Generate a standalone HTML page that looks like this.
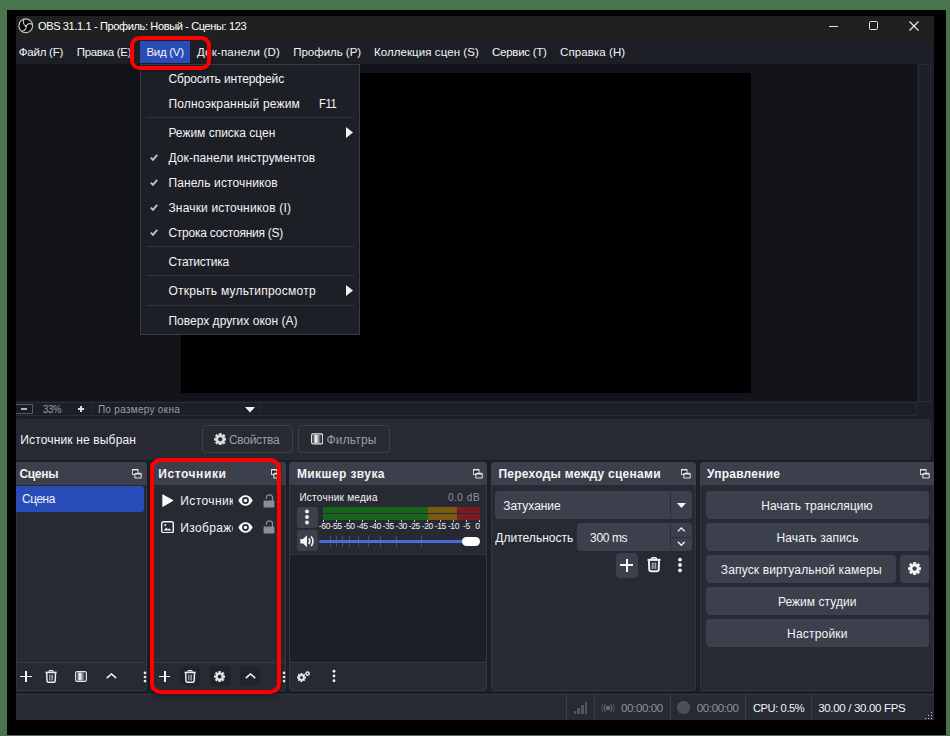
<!DOCTYPE html>
<html lang="ru">
<head>
<meta charset="utf-8">
<title>OBS 31.1.1</title>
<style>
*{box-sizing:border-box;margin:0;padding:0}
html,body{width:950px;height:736px;overflow:hidden}
body{background:#49744c;font-family:"Liberation Sans",sans-serif;font-size:12px;color:#f4f4f4;position:relative}
.b{position:absolute;display:block}
.t{position:absolute;white-space:pre;line-height:1;color:#f4f4f4}
</style>
</head>
<body>
<div class="b" id="clip" style="left:0;top:0;width:950px;height:736px;overflow:hidden">

<div class="b" style="left:7px;top:10px;width:939px;height:725px;background:#000;"></div>
<div class="b" style="left:16px;top:16px;width:918px;height:704px;background:#1d1f26;"></div>
<div class="b" style="left:16px;top:16px;width:918px;height:24px;background:#202020;"></div>
<svg class="b" style="left:18px;top:18px" width="15.500" height="15.500" viewBox="0 0 30 30">
<circle cx="15" cy="15" r="13.300" fill="#0b0b0b" stroke="#c4c4c4" stroke-width="2.200"/>
<g fill="none" stroke="#c9c9c9" stroke-width="2" stroke-linecap="round">
<path d="M15.500 15.500Q8.500 12 11.200 3.400"/>
<path d="M15.500 15.500Q19.500 8.500 27.500 12.200"/>
<path d="M15.500 15.500Q17 23.500 7.500 25.800"/>
</g><circle cx="15.500" cy="15.500" r="1.800" fill="#d8d8d8"/></svg>
<span class="t" style="left:38.2px;top:21.0px;font-size:11.5px;color:#ffffff;letter-spacing:-0.40px;transform:scaleX(0.9605);transform-origin:0 0;">OBS 31.1.1 - Профиль: Новый - Сцены: 123</span>
<div class="b" style="left:829px;top:26px;width:9px;height:1px;background:#e6e6e6;"></div>
<div class="b" style="left:869px;top:21px;width:9px;height:9px;border:1px solid #e6e6e6;border-radius:1.5px"></div>
<svg class="b" style="left:909.400px;top:20.600px" width="10" height="10" viewBox="0 0 10 10"><path d="M.5.500l9 9M9.500.500l-9 9" stroke="#ececec" stroke-width="1.150" fill="none"/></svg>
<div class="b" style="left:16px;top:40px;width:918px;height:24px;background:#1d1f26;"></div>
<div class="b" style="left:140px;top:41px;width:50px;height:22px;background:#284cb8;"></div>
<span class="t" style="left:18.8px;top:47.0px;font-size:11.5px;letter-spacing:-0.24px;">Файл (F)</span>
<span class="t" style="left:76.7px;top:47.0px;font-size:11.5px;letter-spacing:-0.29px;">Правка (E)</span>
<span class="t" style="left:146.4px;top:47.0px;font-size:11.5px;letter-spacing:-0.29px;">Вид (V)</span>
<span class="t" style="left:197.0px;top:47.0px;font-size:11.5px;letter-spacing:0.19px;">Док-панели (D)</span>
<span class="t" style="left:293.2px;top:47.0px;font-size:11.5px;letter-spacing:-0.02px;">Профиль (P)</span>
<span class="t" style="left:374.0px;top:47.0px;font-size:11.5px;letter-spacing:0.07px;">Коллекция сцен (S)</span>
<span class="t" style="left:492.0px;top:47.0px;font-size:11.5px;letter-spacing:-0.27px;">Сервис (T)</span>
<span class="t" style="left:560.0px;top:47.0px;font-size:11.5px;letter-spacing:0.09px;">Справка (H)</span>
<div class="b" style="left:16px;top:64px;width:901px;height:337px;background:#13141a;"></div>
<div class="b" style="left:181px;top:73px;width:570px;height:320px;background:#000;"></div>
<div class="b" style="left:917.5px;top:64px;width:13.5px;height:337.5px;background:#1d1f26;border:1px solid #292c36;"></div>
<div class="b" style="left:931px;top:64px;width:3px;height:352px;background:#1d1f26;"></div>
<div class="b" style="left:16px;top:402px;width:901px;height:14px;background:#1d1f26;border:1px solid #292c36;border-left:none;"></div>
<div class="b" style="left:16px;top:403.500px;width:16.500px;height:10.500px;border:1px solid #555966;border-left:none;background:#1a1c22"></div>
<div class="b" style="left:20.7px;top:408px;width:6.699999999999999px;height:2px;background:#b0b2ba;"></div>
<span class="t" style="left:42.8px;top:405.0px;font-size:10px;color:#9a9da8;letter-spacing:-0.35px;transform:scaleX(0.9578);transform-origin:0 0;">33%</span>
<div class="b" style="left:77.7px;top:408.1px;width:6.599999999999994px;height:1.6999999999999886px;background:#dcdcdc;"></div>
<div class="b" style="left:80.15px;top:405.6px;width:1.6999999999999886px;height:6.699999999999989px;background:#dcdcdc;"></div>
<div class="b" style="left:90.5px;top:403px;width:1.0px;height:12px;background:#262932;"></div>
<span class="t" style="left:97.9px;top:405.0px;font-size:10px;color:#9a9da8;letter-spacing:0.29px;">По размеру окна</span>
<svg class="b" style="left:245px;top:406.500px" width="10" height="6" viewBox="0 0 10 6"><path d="M0 0h10L5 5.500z" fill="#f0f0f0"/></svg>
<div class="b" style="left:259.5px;top:403px;width:1.0px;height:12px;background:#262932;"></div>
<div class="b" style="left:16px;top:419px;width:915.2px;height:40.5px;background:#272a33;border-radius:4px;"></div>
<span class="t" style="left:20.2px;top:434.0px;font-size:12px;letter-spacing:0.16px;">Источник не выбран</span>
<div class="b" style="left:201.500px;top:425px;width:91px;height:28px;border:1px solid #3c404d;border-radius:4px"></div>
<svg class="b" style="left:213.95px;top:432.95px" width="12.5" height="12.5" viewBox="-6.700 -6.700 13.400 13.400"><path d="M-1.31 -4.72L-1.15 -6.50A6.6 6.6 0 0 1 1.15 -6.50L1.31 -4.72A4.9 4.9 0 0 1 2.41 -4.26L3.79 -5.41A6.6 6.6 0 0 1 5.41 -3.79L4.26 -2.41A4.9 4.9 0 0 1 4.72 -1.31L6.50 -1.15A6.6 6.6 0 0 1 6.50 1.15L4.72 1.31A4.9 4.9 0 0 1 4.26 2.41L5.41 3.79A6.6 6.6 0 0 1 3.79 5.41L2.41 4.26A4.9 4.9 0 0 1 1.31 4.72L1.15 6.50A6.6 6.6 0 0 1 -1.15 6.50L-1.31 4.72A4.9 4.9 0 0 1 -2.41 4.26L-3.79 5.41A6.6 6.6 0 0 1 -5.41 3.79L-4.26 2.41A4.9 4.9 0 0 1 -4.72 1.31L-6.50 1.15A6.6 6.6 0 0 1 -6.50 -1.15L-4.72 -1.31A4.9 4.9 0 0 1 -4.26 -2.41L-5.41 -3.79A6.6 6.6 0 0 1 -3.79 -5.41L-2.41 -4.26A4.9 4.9 0 0 1 -1.31 -4.72ZM2.5 0A2.5 2.5 0 1 0 -2.5 0A2.5 2.5 0 1 0 2.5 0Z" fill="#dedede" fill-rule="evenodd" stroke="#dedede" stroke-width="0.5" stroke-linejoin="round"/></svg>
<span class="t" style="left:229.0px;top:434.0px;font-size:12px;color:#9a9da8;letter-spacing:-0.30px;">Свойства</span>
<div class="b" style="left:298px;top:425px;width:91.500px;height:28px;border:1px solid #3c404d;border-radius:4px"></div>
<svg class="b" style="left:310.65000000000003px;top:433.34999999999997px" width="12.3" height="11.7" viewBox="0 0 12 11"><defs><linearGradient id="g316" x1="0" x2="1" y1="0" y2="0"><stop offset="0" stop-color="#e6e6e6" stop-opacity="0.450"/><stop offset="0.220" stop-color="#e6e6e6"/><stop offset="0.400" stop-color="#e6e6e6"/><stop offset="1" stop-color="#e6e6e6" stop-opacity="0.030"/></linearGradient></defs><rect x="0.6" y="0.6" width="10.800" height="9.800" rx="1.600" fill="none" stroke="#e6e6e6" stroke-width="1.200"/><rect x="2.400" y="1.500" width="7.500" height="8" fill="url(#g316)"/></svg>
<span class="t" style="left:326.5px;top:434.0px;font-size:12px;color:#9a9da8;letter-spacing:0.16px;">Фильтры</span>
<div class="b" style="left:16px;top:462px;width:130.8px;height:228.500px;background:#272a33;border-radius:0 4px 4px 0;box-shadow:inset 0 0 0 1px #343742"></div>
<div class="b" style="left:16px;top:462px;width:130.8px;height:23px;background:#3c404d;border-radius:0 4px 0 0"></div>
<span class="t" style="left:19.4px;top:468.0px;font-size:12px;font-weight:700;letter-spacing:-0.28px;">Сцены</span>
<svg class="b" style="left:132px;top:469px" width="10" height="10" viewBox="0 0 10 10"><rect x="0.5" y="0.5" width="5.500" height="5" fill="#262830" stroke="#d8d8d8" stroke-width="1"/><rect x="0.5" y="0" width="5.500" height="1.500" fill="#e8e8e8"/><rect x="2.800" y="4.300" width="6.400" height="4.700" rx="0.8" fill="#3c404d" stroke="#dcdcdc" stroke-width="1.100"/><rect x="2.800" y="4" width="6.400" height="1.600" rx="0.5" fill="#e8e8e8"/></svg>
<div class="b" style="left:16px;top:485.5px;width:128px;height:26.0px;background:#284cb8;border-radius:0 3px 3px 0;"></div>
<span class="t" style="left:21.9px;top:493.0px;font-size:12px;letter-spacing:-0.42px;transform:scaleX(0.9878);transform-origin:0 0;">Сцена</span>
<div class="b" style="left:16px;top:661.6px;width:130.8px;height:1.0px;background:#363945;"></div>
<div class="b" style="left:20.05px;top:675.55px;width:11.5px;height:1.900000000000091px;background:#f6f6f6;"></div><div class="b" style="left:24.85px;top:670.75px;width:1.8999999999999986px;height:11.5px;background:#f6f6f6;"></div>
<svg class="b" style="left:44.90px;top:669.95px" width="12.2" height="13.1" viewBox="0 0 13 14"><path d="M4.400 2V1.400Q4.400.7 5.100.7h2.800q.7 0 .7.700V2" fill="none" stroke="#ececec" stroke-width="1.30"/><path d="M.5 2.600h12" stroke="#ececec" stroke-width="1.70" fill="none"/><path d="M1.800 3.200l.3 8.300q.1 1.700 1.700 1.700h5.400q1.600 0 1.700-1.700l.3-8.300" fill="none" stroke="#ececec" stroke-width="1.60"/><path d="M4.900 5v6.200M6.500 5v6.200M8.100 5v6.200" stroke="#ececec" stroke-width="1" opacity="0.700"/></svg>
<svg class="b" style="left:75.0px;top:670.8px" width="12" height="11" viewBox="0 0 12 11"><defs><linearGradient id="g81" x1="0" x2="1" y1="0" y2="0"><stop offset="0" stop-color="#e4e4e4" stop-opacity="0.450"/><stop offset="0.220" stop-color="#e4e4e4"/><stop offset="0.400" stop-color="#e4e4e4"/><stop offset="1" stop-color="#e4e4e4" stop-opacity="0.030"/></linearGradient></defs><rect x="0.6" y="0.6" width="10.800" height="9.800" rx="1.600" fill="none" stroke="#e4e4e4" stroke-width="1.200"/><rect x="2.400" y="1.500" width="7.500" height="8" fill="url(#g81)"/></svg>
<svg class="b" style="left:105.9px;top:673.4px" width="11" height="6" viewBox="0 0 11 6"><path d="M.8 5.2L5.5 1 10.2 5.2" fill="none" stroke="#f0f0f0" stroke-width="1.6"/></svg>
<svg class="b" style="left:141.8px;top:667.5px" width="6" height="18" viewBox="0 0 6 18"><circle cx="3" cy="4.9" r="1.35" fill="#ececec"/><circle cx="3" cy="9" r="1.35" fill="#ececec"/><circle cx="3" cy="13.1" r="1.35" fill="#ececec"/></svg>
<div class="b" style="left:150px;top:462px;width:135.60000000000002px;height:228.500px;background:#272a33;border-radius:4px;box-shadow:inset 0 0 0 1px #343742"></div>
<div class="b" style="left:150px;top:462px;width:135.60000000000002px;height:23px;background:#3c404d;border-radius:4px 4px 0 0"></div>
<span class="t" style="left:158.2px;top:468.0px;font-size:12px;font-weight:700;letter-spacing:0.58px;">Источники</span>
<svg class="b" style="left:270.5px;top:469px" width="10" height="10" viewBox="0 0 10 10"><rect x="0.5" y="0.5" width="5.500" height="5" fill="#262830" stroke="#d8d8d8" stroke-width="1"/><rect x="0.5" y="0" width="5.500" height="1.500" fill="#e8e8e8"/><rect x="2.800" y="4.300" width="6.400" height="4.700" rx="0.8" fill="#3c404d" stroke="#dcdcdc" stroke-width="1.100"/><rect x="2.800" y="4" width="6.400" height="1.600" rx="0.5" fill="#e8e8e8"/></svg>
<svg class="b" style="left:161.800px;top:493.800px" width="11.500" height="13.200" viewBox="0 0 11.500 13.200"><path d="M.3.800Q.3 0 1 .4l10 5.700q.6.500 0 1L1 12.800q-.7.400-.7-.4z" fill="#fafafa"/></svg>
<div class="b" style="left:180.300px;top:490px;width:52.500px;height:22px;overflow:hidden"><span class="t" style="left:0;top:5px;font-size:12px;letter-spacing:0.400px">Источник медиа</span></div>
<svg class="b" style="left:238.1px;top:495.0px" width="15" height="11" viewBox="0 0 15 11"><path d="M.3 5.500C2.200 1.800 4.700.3 7.500.3s5.300 1.500 7.200 5.200c-1.900 3.700-4.400 5.200-7.200 5.200S2.200 9.200.3 5.500z" fill="#fafafa"/><circle cx="7.500" cy="5.500" r="3.400" fill="#272a33"/><circle cx="7.500" cy="5.500" r="1.700" fill="#fafafa"/></svg>
<svg class="b" style="left:262.6px;top:493.6px" width="12" height="14" viewBox="0 0 12 14"><path d="M2.300 7V3.800C2.300 1.900 3.600.8 5.300.8c1.700 0 3 1.100 3 3V7" fill="none" stroke="#8e8e8e" stroke-width="1.300" transform="translate(1.200 0)"/><rect x="0.6" y="6.600" width="10.800" height="7" rx="0.8" fill="#8e8e8e"/><rect x="3.200" y="4.500" width="1.500" height="2.400" fill="#272a33"/></svg>
<svg class="b" style="left:160.800px;top:520.800px" width="13" height="12.500" viewBox="0 0 13 12.500"><rect x="0.7" y="0.7" width="11.600" height="11.100" rx="1.800" fill="none" stroke="#f4f4f4" stroke-width="1.400"/><path d="M2.700 9.600l2.500-3 1.700 1.800 1.300-1.200 2.200 2.400z" fill="#f4f4f4"/><circle cx="4.300" cy="4" r="1" fill="#f4f4f4"/></svg>
<div class="b" style="left:180.300px;top:517px;width:52.500px;height:22px;overflow:hidden"><span class="t" style="left:0;top:5px;font-size:12px;letter-spacing:0.350px">Изображение</span></div>
<svg class="b" style="left:238.1px;top:521.7px" width="15" height="11" viewBox="0 0 15 11"><path d="M.3 5.500C2.200 1.800 4.700.3 7.500.3s5.300 1.500 7.200 5.200c-1.900 3.700-4.400 5.200-7.200 5.200S2.200 9.200.3 5.500z" fill="#fafafa"/><circle cx="7.500" cy="5.500" r="3.400" fill="#272a33"/><circle cx="7.500" cy="5.500" r="1.700" fill="#fafafa"/></svg>
<svg class="b" style="left:262.6px;top:520.4px" width="12" height="14" viewBox="0 0 12 14"><path d="M2.300 7V3.800C2.300 1.900 3.600.8 5.300.8c1.700 0 3 1.100 3 3V7" fill="none" stroke="#8e8e8e" stroke-width="1.300" transform="translate(1.200 0)"/><rect x="0.6" y="6.600" width="10.800" height="7" rx="0.8" fill="#8e8e8e"/><rect x="3.200" y="4.500" width="1.500" height="2.400" fill="#272a33"/></svg>
<div class="b" style="left:150px;top:661.6px;width:135.60000000000002px;height:1.0px;background:#363945;"></div>
<div class="b" style="left:158.85px;top:675.55px;width:11.5px;height:1.900000000000091px;background:#f6f6f6;"></div><div class="b" style="left:163.65px;top:670.75px;width:1.8999999999999773px;height:11.5px;background:#f6f6f6;"></div>
<div class="b" style="left:179.55px;top:666.3px;width:20.0px;height:20.200000000000045px;background:#21232b;border-radius:4px;"></div>
<div class="b" style="left:210.05px;top:666.3px;width:20.0px;height:20.200000000000045px;background:#21232b;border-radius:4px;"></div>
<div class="b" style="left:240.25px;top:666.3px;width:20.0px;height:20.200000000000045px;background:#21232b;border-radius:4px;"></div>
<svg class="b" style="left:183.90px;top:669.85px" width="12.2" height="13.1" viewBox="0 0 13 14"><path d="M4.400 2V1.400Q4.400.7 5.100.7h2.800q.7 0 .7.700V2" fill="none" stroke="#ececec" stroke-width="1.30"/><path d="M.5 2.600h12" stroke="#ececec" stroke-width="1.70" fill="none"/><path d="M1.800 3.200l.3 8.300q.1 1.700 1.700 1.700h5.400q1.600 0 1.700-1.700l.3-8.300" fill="none" stroke="#ececec" stroke-width="1.60"/><path d="M4.900 5v6.200M6.500 5v6.200M8.100 5v6.200" stroke="#ececec" stroke-width="1" opacity="0.700"/></svg>
<svg class="b" style="left:214.05px;top:670.75px" width="11.3" height="11.3" viewBox="-6.700 -6.700 13.400 13.400"><path d="M-1.31 -4.72L-1.15 -6.50A6.6 6.6 0 0 1 1.15 -6.50L1.31 -4.72A4.9 4.9 0 0 1 2.41 -4.26L3.79 -5.41A6.6 6.6 0 0 1 5.41 -3.79L4.26 -2.41A4.9 4.9 0 0 1 4.72 -1.31L6.50 -1.15A6.6 6.6 0 0 1 6.50 1.15L4.72 1.31A4.9 4.9 0 0 1 4.26 2.41L5.41 3.79A6.6 6.6 0 0 1 3.79 5.41L2.41 4.26A4.9 4.9 0 0 1 1.31 4.72L1.15 6.50A6.6 6.6 0 0 1 -1.15 6.50L-1.31 4.72A4.9 4.9 0 0 1 -2.41 4.26L-3.79 5.41A6.6 6.6 0 0 1 -5.41 3.79L-4.26 2.41A4.9 4.9 0 0 1 -4.72 1.31L-6.50 1.15A6.6 6.6 0 0 1 -6.50 -1.15L-4.72 -1.31A4.9 4.9 0 0 1 -4.26 -2.41L-5.41 -3.79A6.6 6.6 0 0 1 -3.79 -5.41L-2.41 -4.26A4.9 4.9 0 0 1 -1.31 -4.72ZM2.5 0A2.5 2.5 0 1 0 -2.5 0A2.5 2.5 0 1 0 2.5 0Z" fill="#e6e6e6" fill-rule="evenodd" stroke="#e6e6e6" stroke-width="0.5" stroke-linejoin="round"/></svg>
<svg class="b" style="left:244.5px;top:673.4px" width="11" height="6" viewBox="0 0 11 6"><path d="M.8 5.2L5.5 1 10.2 5.2" fill="none" stroke="#f0f0f0" stroke-width="1.6"/></svg>
<svg class="b" style="left:280.9px;top:667.5px" width="6" height="18" viewBox="0 0 6 18"><circle cx="3" cy="4.9" r="1.35" fill="#ececec"/><circle cx="3" cy="9" r="1.35" fill="#ececec"/><circle cx="3" cy="13.1" r="1.35" fill="#ececec"/></svg>
<div class="b" style="left:289.4px;top:462px;width:197.40000000000003px;height:228.500px;background:#272a33;border-radius:4px;box-shadow:inset 0 0 0 1px #343742"></div>
<div class="b" style="left:289.4px;top:462px;width:197.40000000000003px;height:23px;background:#3c404d;border-radius:4px 4px 0 0"></div>
<span class="t" style="left:296.9px;top:468.0px;font-size:12px;font-weight:700;letter-spacing:0.41px;">Микшер звука</span>
<svg class="b" style="left:472.5px;top:469px" width="10" height="10" viewBox="0 0 10 10"><rect x="0.5" y="0.5" width="5.500" height="5" fill="#262830" stroke="#d8d8d8" stroke-width="1"/><rect x="0.5" y="0" width="5.500" height="1.500" fill="#e8e8e8"/><rect x="2.800" y="4.300" width="6.400" height="4.700" rx="0.8" fill="#3c404d" stroke="#dcdcdc" stroke-width="1.100"/><rect x="2.800" y="4" width="6.400" height="1.600" rx="0.5" fill="#e8e8e8"/></svg>
<div class="b" style="left:290.4px;top:554.5px;width:195.40000000000003px;height:107.5px;background:#1d1f26;"></div>
<div class="b" style="left:290.4px;top:553.5px;width:195.40000000000003px;height:1.0px;background:#31343f;"></div>
<span class="t" style="left:299.4px;top:493.0px;font-size:10px;letter-spacing:0.26px;">Источник медиа</span>
<span class="t" style="left:447.9px;top:493.0px;font-size:10px;color:#8f929d;letter-spacing:0.56px;">0.0 dB</span>
<div class="b" style="left:296.5px;top:507px;width:21.19999999999999px;height:20.700000000000045px;background:#3c404d;border-radius:3px;"></div>
<svg class="b" style="left:304px;top:508.29999999999995px" width="6" height="18" viewBox="0 0 6 18"><circle cx="3" cy="3.5" r="1.9" fill="#f4f4f4"/><circle cx="3" cy="9" r="1.9" fill="#f4f4f4"/><circle cx="3" cy="14.5" r="1.9" fill="#f4f4f4"/></svg>
<div class="b" style="left:296.5px;top:530px;width:21.19999999999999px;height:20.700000000000045px;background:#3c404d;border-radius:3px;"></div>
<svg class="b" style="left:299.800px;top:534.500px" width="15.600" height="12.500" viewBox="0 0 15 12"><path d="M.3 3.800h2.600L6.700.3v11.400L2.900 8.200H.3z" fill="#f4f4f4"/><path d="M8.600 3.300q1.700 2.700 0 5.400" fill="none" stroke="#f4f4f4" stroke-width="1.500"/><path d="M10.800 1.300q3.300 4.700 0 9.400" fill="none" stroke="#f4f4f4" stroke-width="1.500"/></svg>
<div class="b" style="left:323px;top:506.6px;width:105.19999999999999px;height:6.399999999999977px;background:#16651b;"></div>
<div class="b" style="left:428.2px;top:506.6px;width:28.69999999999999px;height:6.399999999999977px;background:#7a5a12;"></div>
<div class="b" style="left:456.9px;top:506.6px;width:23.100000000000023px;height:6.399999999999977px;background:#7c1a22;"></div>
<div class="b" style="left:323px;top:514.3px;width:105.19999999999999px;height:5.600000000000023px;background:#16651b;"></div>
<div class="b" style="left:428.2px;top:514.3px;width:28.69999999999999px;height:5.600000000000023px;background:#7a5a12;"></div>
<div class="b" style="left:456.9px;top:514.3px;width:23.100000000000023px;height:5.600000000000023px;background:#7c1a22;"></div>
<div class="b" style="left:322.5px;top:520.3px;width:1.0px;height:2.0px;background:#c8c8c8;"></div>
<span class="t" style="left:318.800px;top:522px;font-size:8.500px;letter-spacing:-0.350px">-60</span>
<div class="b" style="left:335.6px;top:520.3px;width:1.0px;height:2.0px;background:#c8c8c8;"></div>
<span class="t" style="left:326.1px;top:522px;font-size:8.500px;width:20px;text-align:center;letter-spacing:-0.350px">-55</span>
<div class="b" style="left:348.6px;top:520.3px;width:1.0px;height:2.0px;background:#c8c8c8;"></div>
<span class="t" style="left:339.1px;top:522px;font-size:8.500px;width:20px;text-align:center;letter-spacing:-0.350px">-50</span>
<div class="b" style="left:361.6px;top:520.3px;width:1.0px;height:2.0px;background:#c8c8c8;"></div>
<span class="t" style="left:352.1px;top:522px;font-size:8.500px;width:20px;text-align:center;letter-spacing:-0.350px">-45</span>
<div class="b" style="left:374.7px;top:520.3px;width:1.0px;height:2.0px;background:#c8c8c8;"></div>
<span class="t" style="left:365.2px;top:522px;font-size:8.500px;width:20px;text-align:center;letter-spacing:-0.350px">-40</span>
<div class="b" style="left:387.8px;top:520.3px;width:1.0px;height:2.0px;background:#c8c8c8;"></div>
<span class="t" style="left:378.2px;top:522px;font-size:8.500px;width:20px;text-align:center;letter-spacing:-0.350px">-35</span>
<div class="b" style="left:400.8px;top:520.3px;width:1.0px;height:2.0px;background:#c8c8c8;"></div>
<span class="t" style="left:391.3px;top:522px;font-size:8.500px;width:20px;text-align:center;letter-spacing:-0.350px">-30</span>
<div class="b" style="left:413.9px;top:520.3px;width:1.0px;height:2.0px;background:#c8c8c8;"></div>
<span class="t" style="left:404.4px;top:522px;font-size:8.500px;width:20px;text-align:center;letter-spacing:-0.350px">-25</span>
<div class="b" style="left:426.9px;top:520.3px;width:1.0px;height:2.0px;background:#c8c8c8;"></div>
<span class="t" style="left:417.4px;top:522px;font-size:8.500px;width:20px;text-align:center;letter-spacing:-0.350px">-20</span>
<div class="b" style="left:439.9px;top:520.3px;width:1.0px;height:2.0px;background:#c8c8c8;"></div>
<span class="t" style="left:430.4px;top:522px;font-size:8.500px;width:20px;text-align:center;letter-spacing:-0.350px">-15</span>
<div class="b" style="left:453.0px;top:520.3px;width:1.0px;height:2.0px;background:#c8c8c8;"></div>
<span class="t" style="left:443.5px;top:522px;font-size:8.500px;width:20px;text-align:center;letter-spacing:-0.350px">-10</span>
<div class="b" style="left:466.0px;top:520.3px;width:1.0px;height:2.0px;background:#c8c8c8;"></div>
<span class="t" style="left:456.5px;top:522px;font-size:8.500px;width:20px;text-align:center;letter-spacing:-0.350px">-5</span>
<div class="b" style="left:479.1px;top:520.3px;width:1.0px;height:2.0px;background:#c8c8c8;"></div>
<span class="t" style="left:472.0px;top:522px;font-size:8.500px;width:8px;text-align:right">0</span>
<div class="b" style="left:330.0px;top:536.2px;width:1.0px;height:10.599999999999909px;background:#4b4f5c;"></div>
<div class="b" style="left:335.5px;top:536.2px;width:1.0px;height:10.599999999999909px;background:#4b4f5c;"></div>
<div class="b" style="left:341.7px;top:536.2px;width:1.0px;height:10.599999999999909px;background:#4b4f5c;"></div>
<div class="b" style="left:349.0px;top:536.2px;width:1.0px;height:10.599999999999909px;background:#4b4f5c;"></div>
<div class="b" style="left:357.8px;top:536.2px;width:1.0px;height:10.599999999999909px;background:#4b4f5c;"></div>
<div class="b" style="left:367.6px;top:536.2px;width:1.0px;height:10.599999999999909px;background:#4b4f5c;"></div>
<div class="b" style="left:379.9px;top:536.2px;width:1.0px;height:10.599999999999909px;background:#4b4f5c;"></div>
<div class="b" style="left:395.9px;top:536.2px;width:1.0px;height:10.599999999999909px;background:#4b4f5c;"></div>
<div class="b" style="left:421.2px;top:536.2px;width:1.0px;height:10.599999999999909px;background:#4b4f5c;"></div>
<div class="b" style="left:319.4px;top:539.5px;width:150.60000000000002px;height:3.7999999999999545px;background:#476bd7;border-radius:2px;"></div>
<div class="b" style="left:462.3px;top:536.7px;width:17.69999999999999px;height:9.299999999999955px;background:#ffffff;border-radius:4.600px;"></div>
<div class="b" style="left:289.4px;top:662px;width:197.40000000000003px;height:1px;background:#363945;"></div>
<svg class="b" style="left:296.90px;top:673.10px" width="9" height="9" viewBox="-6.700 -6.700 13.400 13.400"><path d="M-1.31 -4.72L-1.15 -6.50A6.6 6.6 0 0 1 1.15 -6.50L1.31 -4.72A4.9 4.9 0 0 1 2.41 -4.26L3.79 -5.41A6.6 6.6 0 0 1 5.41 -3.79L4.26 -2.41A4.9 4.9 0 0 1 4.72 -1.31L6.50 -1.15A6.6 6.6 0 0 1 6.50 1.15L4.72 1.31A4.9 4.9 0 0 1 4.26 2.41L5.41 3.79A6.6 6.6 0 0 1 3.79 5.41L2.41 4.26A4.9 4.9 0 0 1 1.31 4.72L1.15 6.50A6.6 6.6 0 0 1 -1.15 6.50L-1.31 4.72A4.9 4.9 0 0 1 -2.41 4.26L-3.79 5.41A6.6 6.6 0 0 1 -5.41 3.79L-4.26 2.41A4.9 4.9 0 0 1 -4.72 1.31L-6.50 1.15A6.6 6.6 0 0 1 -6.50 -1.15L-4.72 -1.31A4.9 4.9 0 0 1 -4.26 -2.41L-5.41 -3.79A6.6 6.6 0 0 1 -3.79 -5.41L-2.41 -4.26A4.9 4.9 0 0 1 -1.31 -4.72ZM2.5 0A2.5 2.5 0 1 0 -2.5 0A2.5 2.5 0 1 0 2.5 0Z" fill="#ececec" fill-rule="evenodd" stroke="#ececec" stroke-width="0.5" stroke-linejoin="round"/></svg>
<svg class="b" style="left:304.90px;top:671.20px" width="5.2" height="5.2" viewBox="-6.700 -6.700 13.400 13.400"><path d="M-1.31 -4.72L-1.15 -6.50A6.6 6.6 0 0 1 1.15 -6.50L1.31 -4.72A4.9 4.9 0 0 1 2.41 -4.26L3.79 -5.41A6.6 6.6 0 0 1 5.41 -3.79L4.26 -2.41A4.9 4.9 0 0 1 4.72 -1.31L6.50 -1.15A6.6 6.6 0 0 1 6.50 1.15L4.72 1.31A4.9 4.9 0 0 1 4.26 2.41L5.41 3.79A6.6 6.6 0 0 1 3.79 5.41L2.41 4.26A4.9 4.9 0 0 1 1.31 4.72L1.15 6.50A6.6 6.6 0 0 1 -1.15 6.50L-1.31 4.72A4.9 4.9 0 0 1 -2.41 4.26L-3.79 5.41A6.6 6.6 0 0 1 -5.41 3.79L-4.26 2.41A4.9 4.9 0 0 1 -4.72 1.31L-6.50 1.15A6.6 6.6 0 0 1 -6.50 -1.15L-4.72 -1.31A4.9 4.9 0 0 1 -4.26 -2.41L-5.41 -3.79A6.6 6.6 0 0 1 -3.79 -5.41L-2.41 -4.26A4.9 4.9 0 0 1 -1.31 -4.72ZM2.5 0A2.5 2.5 0 1 0 -2.5 0A2.5 2.5 0 1 0 2.5 0Z" fill="#ececec" fill-rule="evenodd" stroke="#ececec" stroke-width="0.5" stroke-linejoin="round"/></svg>
<svg class="b" style="left:330.9px;top:667.4px" width="6" height="18" viewBox="0 0 6 18"><circle cx="3" cy="4.25" r="1.4" fill="#f0f0f0"/><circle cx="3" cy="9" r="1.4" fill="#f0f0f0"/><circle cx="3" cy="13.75" r="1.4" fill="#f0f0f0"/></svg>
<div class="b" style="left:490.9px;top:462px;width:205.0px;height:228.500px;background:#272a33;border-radius:4px;box-shadow:inset 0 0 0 1px #343742"></div>
<div class="b" style="left:490.9px;top:462px;width:205.0px;height:23px;background:#3c404d;border-radius:4px 4px 0 0"></div>
<span class="t" style="left:498.4px;top:468.0px;font-size:12px;font-weight:700;letter-spacing:0.27px;">Переходы между сценами</span>
<svg class="b" style="left:680.5px;top:469px" width="10" height="10" viewBox="0 0 10 10"><rect x="0.5" y="0.5" width="5.500" height="5" fill="#262830" stroke="#d8d8d8" stroke-width="1"/><rect x="0.5" y="0" width="5.500" height="1.500" fill="#e8e8e8"/><rect x="2.800" y="4.300" width="6.400" height="4.700" rx="0.8" fill="#3c404d" stroke="#dcdcdc" stroke-width="1.100"/><rect x="2.800" y="4" width="6.400" height="1.600" rx="0.5" fill="#e8e8e8"/></svg>
<div class="b" style="left:495px;top:490.7px;width:196.70000000000005px;height:28.30000000000001px;background:#3c404d;border-radius:4px;"></div>
<div class="b" style="left:670.4px;top:491.7px;width:1.0px;height:26.30000000000001px;background:#2b2e38;"></div>
<svg class="b" style="left:677px;top:502.800px" width="9" height="5" viewBox="0 0 9 5"><path d="M0 0h9L4.500 5z" fill="#f4f4f4"/></svg>
<span class="t" style="left:503.2px;top:500.0px;font-size:12px;letter-spacing:-0.04px;">Затухание</span>
<span class="t" style="left:495.3px;top:532.0px;font-size:12px;letter-spacing:0.02px;">Длительность</span>
<div class="b" style="left:577.1px;top:523px;width:114.60000000000002px;height:27.799999999999955px;background:#3c404d;border-radius:4px;"></div>
<div class="b" style="left:670.4px;top:524px;width:1.0px;height:26.200000000000045px;background:#2b2e38;"></div>
<div class="b" style="left:671.4px;top:536.8px;width:19.600000000000023px;height:1.0px;background:#2b2e38;"></div>
<span class="t" style="left:590.1px;top:532.0px;font-size:12px;letter-spacing:-0.37px;">300 ms</span>
<svg class="b" style="left:676.8000000000001px;top:527.3px" width="8.6" height="5.2" viewBox="0 0 8.6 5.2"><path d="M.8 4.4L4.3 1 7.8 4.4" fill="none" stroke="#f0f0f0" stroke-width="1.35"/></svg>
<svg class="b" style="left:676.8000000000001px;top:541.4px" width="8.6" height="5.2" viewBox="0 0 8.6 5.2"><path d="M.8 .8L4.3 4.2 7.8 .8" fill="none" stroke="#f0f0f0" stroke-width="1.35"/></svg>
<div class="b" style="left:615.5px;top:553.2px;width:22.5px;height:24.399999999999977px;background:#3c404d;border-radius:4px;"></div>
<div class="b" style="left:620.25px;top:564.325px;width:13.0px;height:2.0499999999999545px;background:#f6f6f6;"></div><div class="b" style="left:625.725px;top:558.85px;width:2.0499999999999545px;height:13.0px;background:#f6f6f6;"></div>
<svg class="b" style="left:646.90px;top:557.40px" width="14" height="15.2" viewBox="0 0 13 14"><path d="M4.400 2V1.400Q4.400.7 5.100.7h2.800q.7 0 .7.700V2" fill="none" stroke="#f0f0f0" stroke-width="1.49"/><path d="M.5 2.600h12" stroke="#f0f0f0" stroke-width="1.95" fill="none"/><path d="M1.800 3.200l.3 8.300q.1 1.700 1.700 1.700h5.400q1.600 0 1.700-1.700l.3-8.300" fill="none" stroke="#f0f0f0" stroke-width="1.84"/><path d="M4.900 5v6.200M6.500 5v6.200M8.100 5v6.200" stroke="#f0f0f0" stroke-width="1" opacity="0.700"/></svg>
<svg class="b" style="left:677.1px;top:556.45px" width="6" height="18" viewBox="0 0 6 18"><circle cx="3" cy="3.55" r="1.9" fill="#f0f0f0"/><circle cx="3" cy="9" r="1.9" fill="#f0f0f0"/><circle cx="3" cy="14.45" r="1.9" fill="#f0f0f0"/></svg>
<div class="b" style="left:700px;top:462px;width:234px;height:228.500px;background:#272a33;border-radius:4px 0 0 4px;box-shadow:inset 0 0 0 1px #343742"></div>
<div class="b" style="left:700px;top:462px;width:234px;height:23px;background:#3c404d;border-radius:4px 0 0 0"></div>
<span class="t" style="left:707.1px;top:468.0px;font-size:12px;font-weight:700;letter-spacing:0.21px;">Управление</span>
<svg class="b" style="left:919.5px;top:469px" width="10" height="10" viewBox="0 0 10 10"><rect x="0.5" y="0.5" width="5.500" height="5" fill="#262830" stroke="#d8d8d8" stroke-width="1"/><rect x="0.5" y="0" width="5.500" height="1.500" fill="#e8e8e8"/><rect x="2.800" y="4.300" width="6.400" height="4.700" rx="0.8" fill="#3c404d" stroke="#dcdcdc" stroke-width="1.100"/><rect x="2.800" y="4" width="6.400" height="1.600" rx="0.5" fill="#e8e8e8"/></svg>
<div class="b" style="left:706.3px;top:491px;width:222.70000000000005px;height:28px;background:#3c404d;border-radius:4px;"></div>
<span class="t" style="left:761.3px;top:500.0px;font-size:12px;letter-spacing:0.06px;">Начать трансляцию</span>
<div class="b" style="left:706.3px;top:523px;width:222.70000000000005px;height:28px;background:#3c404d;border-radius:4px;"></div>
<span class="t" style="left:776.5px;top:532.0px;font-size:12px;letter-spacing:0.12px;">Начать запись</span>
<div class="b" style="left:706.3px;top:555px;width:190.0px;height:28px;background:#3c404d;border-radius:4px;"></div>
<span class="t" style="left:720.8px;top:564.0px;font-size:12px;letter-spacing:0.14px;">Запуск виртуальной камеры</span>
<div class="b" style="left:706.3px;top:587px;width:222.70000000000005px;height:28px;background:#3c404d;border-radius:4px;"></div>
<span class="t" style="left:777.9px;top:596.0px;font-size:12px;letter-spacing:0.05px;">Режим студии</span>
<div class="b" style="left:706.3px;top:619px;width:222.70000000000005px;height:28px;background:#3c404d;border-radius:4px;"></div>
<span class="t" style="left:787.0px;top:628.0px;font-size:12px;letter-spacing:0.21px;">Настройки</span>
<div class="b" style="left:900px;top:555px;width:29px;height:28px;background:#3c404d;border-radius:4px;"></div>
<svg class="b" style="left:907.90px;top:562.20px" width="13.2" height="13.2" viewBox="-6.700 -6.700 13.400 13.400"><path d="M-1.31 -4.72L-1.15 -6.50A6.6 6.6 0 0 1 1.15 -6.50L1.31 -4.72A4.9 4.9 0 0 1 2.41 -4.26L3.79 -5.41A6.6 6.6 0 0 1 5.41 -3.79L4.26 -2.41A4.9 4.9 0 0 1 4.72 -1.31L6.50 -1.15A6.6 6.6 0 0 1 6.50 1.15L4.72 1.31A4.9 4.9 0 0 1 4.26 2.41L5.41 3.79A6.6 6.6 0 0 1 3.79 5.41L2.41 4.26A4.9 4.9 0 0 1 1.31 4.72L1.15 6.50A6.6 6.6 0 0 1 -1.15 6.50L-1.31 4.72A4.9 4.9 0 0 1 -2.41 4.26L-3.79 5.41A6.6 6.6 0 0 1 -5.41 3.79L-4.26 2.41A4.9 4.9 0 0 1 -4.72 1.31L-6.50 1.15A6.6 6.6 0 0 1 -6.50 -1.15L-4.72 -1.31A4.9 4.9 0 0 1 -4.26 -2.41L-5.41 -3.79A6.6 6.6 0 0 1 -3.79 -5.41L-2.41 -4.26A4.9 4.9 0 0 1 -1.31 -4.72ZM2.5 0A2.5 2.5 0 1 0 -2.5 0A2.5 2.5 0 1 0 2.5 0Z" fill="#f6f6f6" fill-rule="evenodd" stroke="#f6f6f6" stroke-width="0.5" stroke-linejoin="round"/></svg>
<div class="b" style="left:16px;top:694px;width:918px;height:26px;background:#272a33;border-top:1px solid #363945;"></div>
<div class="b" style="left:566.3px;top:694px;width:1.0px;height:26px;background:#383b47;"></div>
<div class="b" style="left:593.7px;top:694px;width:1.0px;height:26px;background:#383b47;"></div>
<div class="b" style="left:669.5px;top:694px;width:1.0px;height:26px;background:#383b47;"></div>
<div class="b" style="left:745.3px;top:694px;width:1.0px;height:26px;background:#383b47;"></div>
<div class="b" style="left:810.5px;top:694px;width:1.0px;height:26px;background:#383b47;"></div>
<div class="b" style="left:573.5px;top:711px;width:2.7999999999999545px;height:3px;background:#50545f;"></div>
<div class="b" style="left:577.2px;top:708px;width:2.7999999999999545px;height:6px;background:#50545f;"></div>
<div class="b" style="left:580.9px;top:705px;width:2.7999999999999545px;height:9px;background:#50545f;"></div>
<div class="b" style="left:584.6px;top:701.5px;width:2.7999999999999545px;height:12.5px;background:#50545f;"></div>
<svg class="b" style="left:600.500px;top:701.500px" width="14" height="12" viewBox="0 0 14 12"><circle cx="7" cy="6" r="2.200" fill="#6a6d78"/><path d="M4.300 2.600q-2.200 3.400 0 6.800M9.700 2.600q2.200 3.400 0 6.800" fill="none" stroke="#6a6d78" stroke-width="1.100"/><path d="M2.300 1.200q-3.200 4.800 0 9.600M11.700 1.200q3.200 4.800 0 9.600" fill="none" stroke="#565964" stroke-width="1"/></svg>
<span class="t" style="left:621.0px;top:703.0px;font-size:11.5px;color:#8f929d;letter-spacing:-0.37px;">00:00:00</span>
<div class="b" style="left:677.300px;top:701.200px;width:12.400px;height:12.400px;border-radius:50%;background:#4b4f5c"></div>
<span class="t" style="left:696.8px;top:703.0px;font-size:11.5px;color:#8f929d;letter-spacing:-0.37px;">00:00:00</span>
<span class="t" style="left:753.0px;top:703.0px;font-size:11.5px;letter-spacing:-0.40px;transform:scaleX(0.9633);transform-origin:0 0;">CPU: 0.5%</span>
<span class="t" style="left:818.2px;top:703.0px;font-size:11.5px;letter-spacing:-0.32px;">30.00 / 30.00 FPS</span>
<div class="b" style="left:930.5px;top:711.5px;width:1.8999999999999773px;height:1.8999999999999773px;background:#d0d0d0;"></div>
<div class="b" style="left:927.5px;top:714.5px;width:1.8999999999999773px;height:1.8999999999999773px;background:#d0d0d0;"></div>
<div class="b" style="left:930.5px;top:714.5px;width:1.8999999999999773px;height:1.8999999999999773px;background:#d0d0d0;"></div>
<div class="b" style="left:924.5px;top:717.5px;width:1.8999999999999773px;height:1.8999999999999773px;background:#d0d0d0;"></div>
<div class="b" style="left:927.5px;top:717.5px;width:1.8999999999999773px;height:1.8999999999999773px;background:#d0d0d0;"></div>
<div class="b" style="left:930.5px;top:717.5px;width:1.8999999999999773px;height:1.8999999999999773px;background:#d0d0d0;"></div>
<div class="b" style="left:140px;top:64px;width:220px;height:271px;background:#1d1f26;border:1px solid #383b47"></div>
<span class="t" style="left:168.4px;top:73.0px;font-size:12px;letter-spacing:-0.13px;">Сбросить интерфейс</span>
<span class="t" style="left:168.4px;top:98.0px;font-size:12px;letter-spacing:0.18px;">Полноэкранный режим</span>
<span class="t" style="left:168.4px;top:127.0px;font-size:12px;letter-spacing:-0.01px;">Режим списка сцен</span>
<span class="t" style="left:168.4px;top:152.0px;font-size:12px;letter-spacing:0.10px;">Док-панели инструментов</span>
<span class="t" style="left:168.4px;top:177.0px;font-size:12px;letter-spacing:0.13px;">Панель источников</span>
<span class="t" style="left:168.4px;top:202.0px;font-size:12px;letter-spacing:0.18px;">Значки источников (I)</span>
<span class="t" style="left:168.4px;top:227.0px;font-size:12px;letter-spacing:-0.24px;">Строка состояния (S)</span>
<span class="t" style="left:168.4px;top:256.0px;font-size:12px;letter-spacing:-0.24px;">Статистика</span>
<span class="t" style="left:168.4px;top:285.0px;font-size:12px;letter-spacing:0.26px;">Открыть мультипросмотр</span>
<span class="t" style="left:168.4px;top:315.0px;font-size:12px;letter-spacing:0.02px;">Поверх других окон (A)</span>
<span class="t" style="left:319.0px;top:98.0px;font-size:12px;letter-spacing:-0.42px;transform:scaleX(0.9337);transform-origin:0 0;">F11</span>
<div class="b" style="left:146px;top:117px;width:208px;height:1px;background:#31343f;"></div>
<div class="b" style="left:146px;top:246px;width:208px;height:1px;background:#31343f;"></div>
<div class="b" style="left:146px;top:275px;width:208px;height:1px;background:#31343f;"></div>
<div class="b" style="left:146px;top:305px;width:208px;height:1px;background:#31343f;"></div>
<svg class="b" style="left:346px;top:127.19999999999999px" width="7" height="11" viewBox="0 0 7 11"><path d="M0 0L7 5.500 0 11z" fill="#f0f0f0"/></svg>
<svg class="b" style="left:346px;top:285.2px" width="7" height="11" viewBox="0 0 7 11"><path d="M0 0L7 5.500 0 11z" fill="#f0f0f0"/></svg>
<svg class="b" style="left:150px;top:154.0px" width="8" height="7" viewBox="0 0 8 7"><path d="M.8 3.600L3 5.800 7.200.9" stroke="#bdbec3" stroke-width="2" fill="none"/></svg>
<svg class="b" style="left:150px;top:179.0px" width="8" height="7" viewBox="0 0 8 7"><path d="M.8 3.600L3 5.800 7.200.9" stroke="#bdbec3" stroke-width="2" fill="none"/></svg>
<svg class="b" style="left:150px;top:204.0px" width="8" height="7" viewBox="0 0 8 7"><path d="M.8 3.600L3 5.800 7.200.9" stroke="#bdbec3" stroke-width="2" fill="none"/></svg>
<svg class="b" style="left:150px;top:229.0px" width="8" height="7" viewBox="0 0 8 7"><path d="M.8 3.600L3 5.800 7.200.9" stroke="#bdbec3" stroke-width="2" fill="none"/></svg>
<div class="b" style="left:130.200px;top:36.200px;width:80.500px;height:34.300px;border:4.600px solid #fe0000;border-radius:9.500px;box-shadow:0 1px 3px rgba(0,0,0,0.300)"></div>
<div class="b" style="left:150.400px;top:457.600px;width:131px;height:236px;border:4.650px solid #fe0000;border-radius:10.500px;box-shadow:0 2px 4px rgba(0,0,0,0.350)"></div>
</div>
</body>
</html>
